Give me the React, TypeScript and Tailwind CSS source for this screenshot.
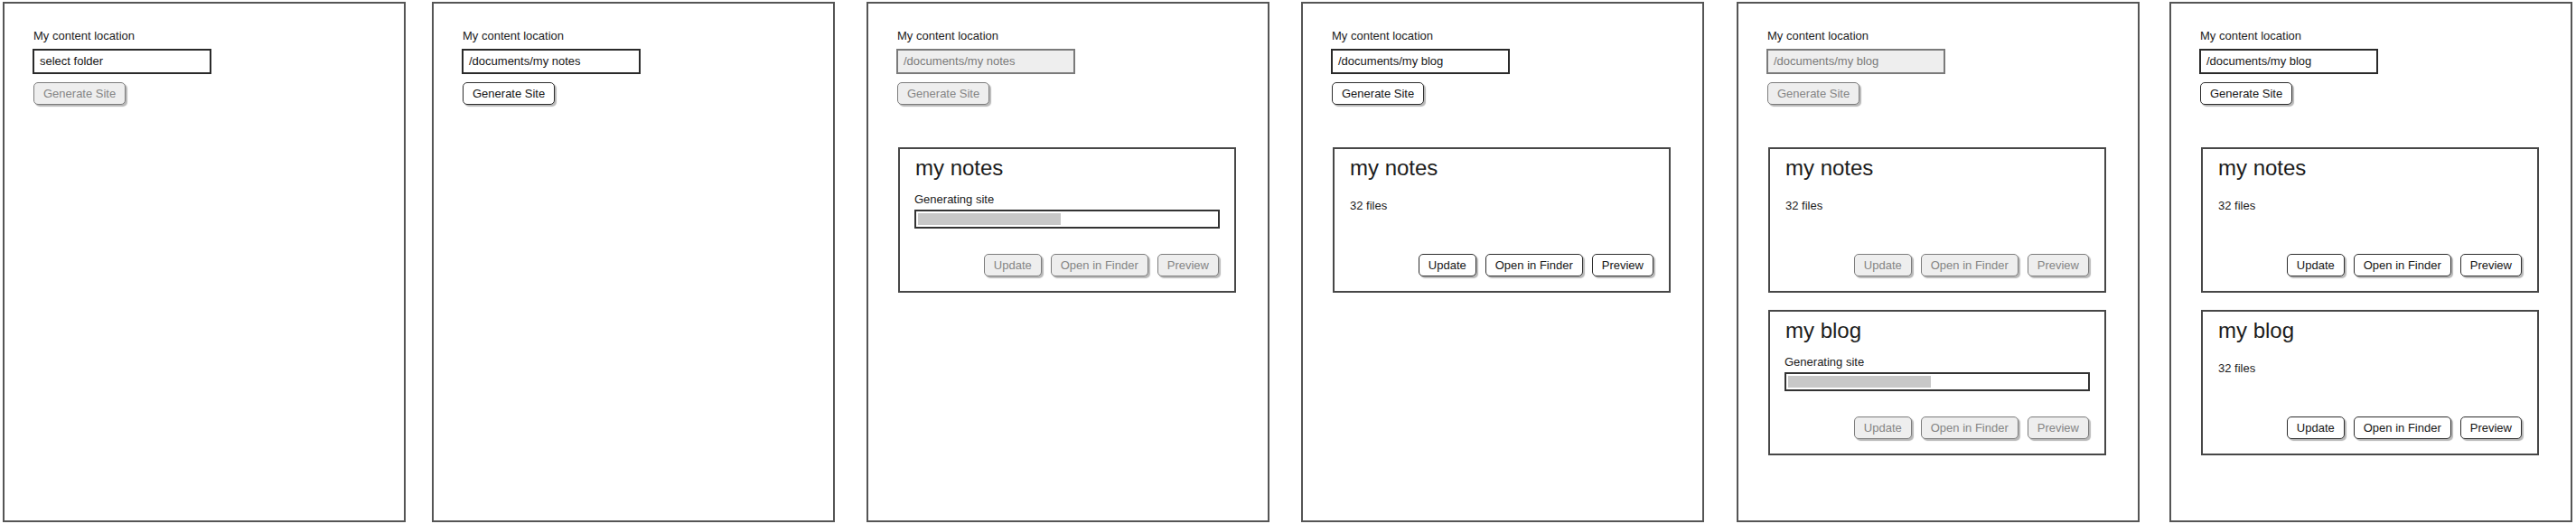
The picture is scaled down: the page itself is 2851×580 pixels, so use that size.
import React from 'react';

type CardState = { title: string; generating: boolean; active: boolean };

interface Screen {
  path: string;
  inputLocked: boolean;
  canGenerate: boolean;
  cards: CardState[];
}

const SCREENS: Screen[] = [
  { path: 'select folder', inputLocked: false, canGenerate: false, cards: [] },
  { path: '/documents/my notes', inputLocked: false, canGenerate: true, cards: [] },
  {
    path: '/documents/my notes',
    inputLocked: true,
    canGenerate: false,
    cards: [{ title: 'my notes', generating: true, active: false }],
  },
  {
    path: '/documents/my blog',
    inputLocked: false,
    canGenerate: true,
    cards: [{ title: 'my notes', generating: false, active: true }],
  },
  {
    path: '/documents/my blog',
    inputLocked: true,
    canGenerate: false,
    cards: [
      { title: 'my notes', generating: false, active: false },
      { title: 'my blog', generating: true, active: false },
    ],
  },
  {
    path: '/documents/my blog',
    inputLocked: false,
    canGenerate: true,
    cards: [
      { title: 'my notes', generating: false, active: true },
      { title: 'my blog', generating: false, active: true },
    ],
  },
];

// hand-tuned offsets, the sketch panels aren't evenly spaced
const PANEL_MARGINS = ['ml-[3px]', 'ml-[29px]', 'ml-[35px]', 'ml-[35px]', 'ml-[36px]', 'ml-[33px]'];

function SketchButton({ label, enabled }: { label: string; enabled: boolean }) {
  return (
    <button
      className={
        'h-[25px] px-[10px] rounded-[5px] border-[1.5px] text-[13px] leading-none shadow-[2px_2px_1px_rgba(0,0,0,0.28)] ' +
        (enabled ? 'bg-white border-[#2e2e2e] text-[#151515]' : 'bg-[#eeeeee] border-[#7c7c7c] text-[#858585]')
      }
    >
      {label}
    </button>
  );
}

function SiteCard({ card }: { card: CardState }) {
  return (
    <div className="w-[374px] h-[161px] border-2 border-[#474747] bg-white flex flex-col pl-[16px] pr-[16px] pt-[6px] pb-[16px]">
      <h2 className="text-[24px] leading-[30px] text-[#1c1c1c] ml-[1px]">{card.title}</h2>
      {card.generating ? (
        <div className="mt-[12px]">
          <p className="text-[13px] leading-[16px] text-[#1a1a1a]">Generating site</p>
          <div className="mt-[3px] h-[21px] w-full border-2 border-[#333] p-[2px]">
            <div className="h-full w-[48%] bg-[#c8c8c8]" />
          </div>
        </div>
      ) : (
        <p className="mt-[19px] text-[13px] leading-[16px] text-[#1a1a1a] ml-[1px]">32 files</p>
      )}
      <div className="mt-auto flex justify-end gap-[10px] pr-[1px]">
        <SketchButton label="Update" enabled={card.active} />
        <SketchButton label="Open in Finder" enabled={card.active} />
        <SketchButton label="Preview" enabled={card.active} />
      </div>
    </div>
  );
}

function Panel({ screen, margin }: { screen: Screen; margin: string }) {
  return (
    <div className={'w-[446px] h-[576px] border-2 border-[#555] bg-white flex flex-col pl-[31px] pt-[28px] ' + margin}>
      <label className="text-[13px] leading-[16px] text-[#1a1a1a] ml-[1px]">My content location</label>
      <div
        className={
          'mt-[6px] w-[198px] h-[28px] border-2 flex items-center px-[6px] text-[13px] ' +
          (screen.inputLocked ? 'bg-[#eeeeee] border-[#7a7a7a] text-[#7a7a7a]' : 'bg-white border-[#2a2a2a] text-[#151515]')
        }
      >
        {screen.path}
      </div>
      <div className="mt-[9px] ml-[1px]">
        <SketchButton label="Generate Site" enabled={screen.canGenerate} />
      </div>
      {screen.cards.length > 0 && (
        <div className="mt-[47px] ml-[2px] flex flex-col gap-[19px]">
          {screen.cards.map((c, i) => (
            <SiteCard key={i} card={c} />
          ))}
        </div>
      )}
    </div>
  );
}

export default function App() {
  return (
    <div
      className="w-[2851px] h-[580px] bg-white flex items-start pt-[2px]"
      style={{ fontFamily: '"Liberation Sans", Arial, sans-serif' }}
    >
      {SCREENS.map((s, i) => (
        <Panel key={i} screen={s} margin={PANEL_MARGINS[i]} />
      ))}
    </div>
  );
}
